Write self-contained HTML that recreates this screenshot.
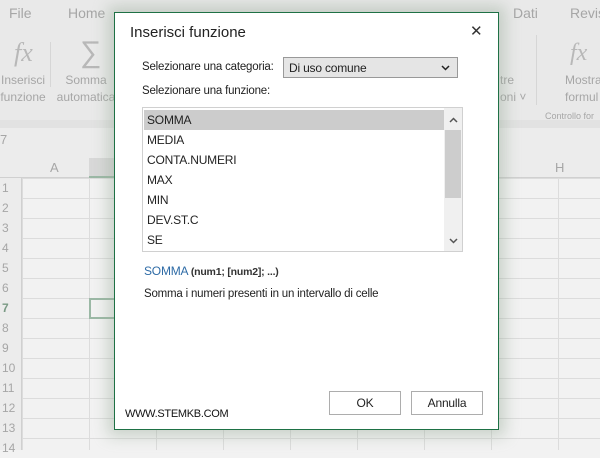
<!DOCTYPE html>
<html><head><meta charset="utf-8"><style>
*{margin:0;padding:0;box-sizing:border-box}
body{width:600px;height:450px;overflow:hidden;position:relative;background:#f2f2f2;font-family:"Liberation Sans",sans-serif;color:#a6a6a6}
.a{position:absolute;white-space:nowrap}
.grid{position:absolute;left:0;top:178px;width:600px;height:272px;
background-image:linear-gradient(to right,#dcdcdc 1px,transparent 1px),linear-gradient(to bottom,#dcdcdc 1px,transparent 1px);
background-size:67px 20px;background-position:22px 0;}
.d{position:absolute;left:114px;top:12px;width:385px;height:418px;background:#fff;border:1px solid #1e7145;box-shadow:0 0 14px 6px rgba(150,170,150,.45);color:#222;font-size:11.5px;letter-spacing:-0.2px}
</style></head><body>
<div class="a" style="left:0;top:0;width:600px;height:120px;background:#e9e9e9"></div>
<div class="a" style="left:9px;top:5px;font-size:14px">File</div>
<div class="a" style="left:68px;top:5px;font-size:14px">Home</div>
<div class="a" style="left:513px;top:5px;font-size:14px">Dati</div>
<div class="a" style="left:570px;top:5px;font-size:14px">Revis</div>
<div class="a" style="left:14px;top:38px;font-size:26px;font-family:'Liberation Serif',serif;font-style:italic;color:#b8b8b8">fx</div>
<div class="a" style="left:0;top:72px;font-size:12px;line-height:17px;text-align:center;width:46px">Inserisci<br>funzione</div>
<div class="a" style="left:80px;top:36px;font-size:30px;color:#b8b8b8">∑</div>
<div class="a" style="left:56px;top:72px;font-size:12px;line-height:17px;text-align:center;width:60px">Somma<br>automatica</div>
<div class="a" style="left:50px;top:42px;width:1px;height:45px;background:#d6d6d6"></div>
<div class="a" style="left:536px;top:35px;width:1px;height:70px;background:#d6d6d6"></div>
<div class="a" style="left:570px;top:40px;font-size:24px;font-family:'Liberation Serif',serif;font-style:italic;color:#b8b8b8">fx</div>
<div class="a" style="left:565px;top:72px;font-size:12px;line-height:17px">Mostra<br>formul</div>
<div class="a" style="left:545px;top:111px;font-size:9px">Controllo for</div>
<div class="a" style="left:500px;top:72px;font-size:12px;line-height:17px">tre<br>oni ˅</div>
<div class="a" style="left:0;top:120px;width:600px;height:8px;background:#e2e2e2"></div>
<div class="a" style="left:0;top:128px;width:600px;height:24px;background:#ececec"></div>
<div class="a" style="left:0;top:132px;font-size:13px">7</div>
<div class="a" style="left:0;top:152px;width:600px;height:26px;background:#ececec;border-bottom:1px solid #d0d0d0"></div>
<div class="a" style="left:50px;top:160px;font-size:13px">A</div>
<div class="a" style="left:555px;top:160px;font-size:13px">H</div>
<div class="a" style="left:89px;top:158px;width:30px;height:20px;background:#d8d8d8;border-bottom:2px solid #9bb8a5"></div>
<div class="grid"></div>
<div class="a" style="left:0;top:178px;width:22px;height:272px;background:#ececec;border-right:1px solid #d0d0d0;font-size:12px;line-height:20px;padding-left:2px">1<br>2<br>3<br>4<br>5<br>6<br><b style="color:#7a9a85">7</b><br>8<br>9<br>10<br>11<br>12<br>13<br>14</div>
<div class="a" style="left:89px;top:298px;width:30px;height:21px;border:2px solid #9bb8a5"></div>
<div class="d">
<div class="a" style="left:15px;top:11px;font-size:15px;letter-spacing:0">Inserisci funzione</div>
<div class="a" style="left:355px;top:9px;font-size:15px;color:#333">✕</div>
<div class="a" style="left:27px;top:48px">Selezionare una categoria:</div>
<div class="a" style="left:168px;top:44px;width:175px;height:21px;background:#e5e5e5;border:1px solid #999;padding:3px 5px;font-size:12px">Di uso comune<svg style="position:absolute;right:7px;top:7px" width="9" height="6"><path d="M1 1 L4.5 4.5 L8 1" fill="none" stroke="#222" stroke-width="1.5"/></svg></div>
<div class="a" style="left:27px;top:72px">Selezionare una funzione:</div>
<div class="a" style="left:27px;top:94px;width:321px;height:145px;border:1px solid #d0d0d0;font-size:12px;line-height:20px">
<div style="position:absolute;left:1px;top:2px;width:300px;height:20px;background:#ccc"></div>
<div style="position:absolute;left:301px;top:0;width:18px;height:143px;background:#f0f0f0"></div>
<div style="position:absolute;left:302px;top:22px;width:16px;height:68px;background:#cdcdcd"></div>
<svg style="position:absolute;left:306px;top:9px" width="9" height="6"><path d="M1 5 L4.5 1.5 L8 5" fill="none" stroke="#555" stroke-width="1.5"/></svg>
<svg style="position:absolute;left:306px;top:130px" width="9" height="6"><path d="M1 1 L4.5 4.5 L8 1" fill="none" stroke="#555" stroke-width="1.5"/></svg>
<div style="position:absolute;left:4px;top:2px">SOMMA<br>MEDIA<br>CONTA.NUMERI<br>MAX<br>MIN<br>DEV.ST.C<br>SE</div>
</div>
<div class="a" style="left:29px;top:251px;font-size:12px"><span style="color:#2e6ba6">SOMMA</span> <b style="font-size:10.5px;color:#333">(num1; [num2]; ...)</b></div>
<div class="a" style="left:29px;top:275px">Somma i numeri presenti in un intervallo di celle</div>
<div class="a" style="left:10px;top:395px;font-size:11px;color:#111;letter-spacing:-0.3px">WWW.STEMKB.COM</div>
<div class="a" style="left:214px;top:378px;width:72px;height:24px;border:1px solid #adadad;text-align:center;line-height:22px;font-size:12px">OK</div>
<div class="a" style="left:296px;top:378px;width:72px;height:24px;border:1px solid #adadad;text-align:center;line-height:22px;font-size:12px">Annulla</div>
</div>
</body></html>
